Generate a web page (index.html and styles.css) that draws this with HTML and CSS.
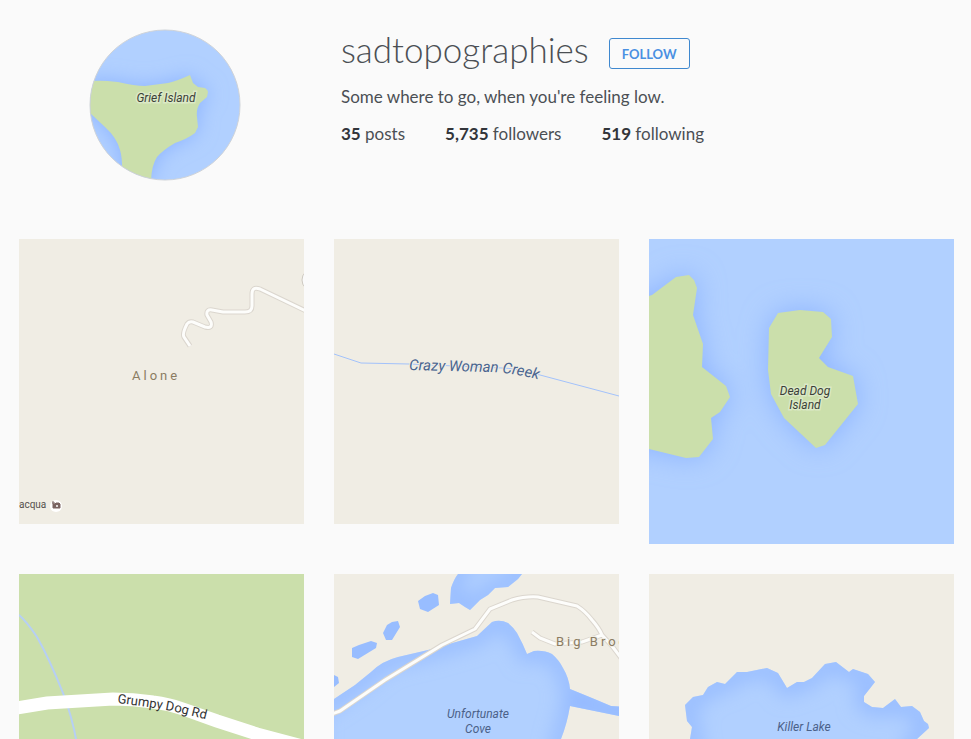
FILE: index.html
```html
<!DOCTYPE html>
<html lang="en">
<head>
    <meta charset="UTF-8">
    <meta name="viewport" content="width=device-width, initial-scale=1.0">
    <title>sadtopographies</title>
    <link rel="stylesheet" href="styles.css">
</head>
<body>
    <header class="profile">
        <svg class="avatar" viewBox="0 0 152 152" role="img" aria-label="Grief Island">
            <defs>
                <clipPath id="round"><circle cx="76" cy="76" r="75"/></clipPath>
                <filter id="blur" x="-50%" y="-50%" width="200%" height="200%"><feGaussianBlur stdDeviation="14"/></filter>
                <filter id="blurSmall" x="-50%" y="-50%" width="200%" height="200%"><feGaussianBlur stdDeviation="10"/></filter>
                <path id="grief" d="M-5 52 L4 52 Q12 51 29 53 Q46 57 56 57 L79 54 Q88 52 101 46 L104 54 L109 58 L116 59 Q119 61 119 63 L118 68 L111 74 Q107 80 108 88 L109 98 L106 104 Q98 110 86 114 Q74 121 68 128 Q62 137 62 155 L33 155 Q34 130 31 121 Q28 109 16 98 L1 84 L-5 84 Z"/>
            </defs>
            <g clip-path="url(#round)">
                <rect class="water" width="152" height="152"/>
                <use href="#grief" class="shade" filter="url(#blurSmall)"/>
                <use href="#grief" class="park"/>
                <text class="place halo-park" x="77" y="73">Grief Island</text>
            </g>
            <circle class="ring" cx="76" cy="76" r="75"/>
        </svg>

        <div class="info">
            <div class="title">
                <h1>sadtopographies</h1>
                <button type="button" class="follow">FOLLOW</button>
            </div>
            <p class="bio">Some where to go, when you're feeling low.</p>
            <ul class="stats">
                <li><b>35</b> posts</li>
                <li><b>5,735</b> followers</li>
                <li><b>519</b> following</li>
            </ul>
        </div>
    </header>

    <main class="photos">
        <!-- Alone -->
        <svg class="photo" viewBox="0 0 285 285">
            <defs>
                <path id="track" d="M171 107 L165 98 Q163 95 168 85 Q170 82 174 83 L186 88 Q194 90 192 83 L188 76 Q187 70 193 71 L204 73 L226 73 Q233 73 233 67 L233 55 Q233 47 241 50 L287 72"/>
            </defs>
            <rect class="land" width="285" height="285"/>
            <use href="#track" class="road-edge"/>
            <use href="#track" class="road-top"/>
            <circle class="bend" cx="294" cy="41" r="11"/>
            <text class="town" x="113" y="141">Alone</text>
            <text class="poi" x="0" y="269">acqua</text>
            <circle class="white" cx="37" cy="267" r="6"/>
            <path class="camera" d="M34 265 h2 l1 -1 h3 l1 1 v4 h-7 z M33 264 h3 M34 262 v3"/>
            <circle class="white" cx="38" cy="267" r="1"/>
        </svg>

        <!-- Crazy Woman Creek -->
        <svg class="photo" viewBox="0 0 285 285">
            <rect class="land" width="285" height="285"/>
            <path class="creek" d="M0 115 L27 124 L75 125 L168 129 Q180 129 206 136 L285 157"/>
            <path id="creekLine" fill="none" d="M75 131 L155 133 Q175 133 215 143"/>
            <text class="creek-name"><textPath href="#creekLine">Crazy Woman Creek</textPath></text>
        </svg>

        <!-- Dead Dog Island -->
        <svg class="photo" viewBox="0 0 305 305">
            <defs>
                <path id="mainland" d="M-30 58 L0 57 L3 56 L27 38 L40 36 L45 41 L48 49 L44 76 L54 105 L53 128 L77 147 L81 158 L71 173 L62 179 L64 200 L50 218 L37 219 L0 210 L-30 210 Z"/>
                <path id="deadDog" d="M129 74 L151 71 L174 73 L182 80 L183 98 L170 119 L179 128 L204 137 L209 165 L176 206 L167 209 L135 179 L122 155 L119 131 L120 89 Z"/>
            </defs>
            <rect class="water" width="305" height="305"/>
            <g class="shade" filter="url(#blur)">
                <use href="#mainland"/>
                <use href="#deadDog"/>
            </g>
            <use href="#mainland" class="park"/>
            <use href="#deadDog" class="park"/>
            <text class="place halo-park" x="156" y="156">Dead Dog</text>
            <text class="place halo-park" x="156" y="170">Island</text>
        </svg>

        <!-- Grumpy Dog Rd -->
        <svg class="photo" viewBox="0 0 285 285">
            <rect class="park" width="285" height="285"/>
            <path class="stream" d="M0 41 Q8 48 18 63 Q30 84 44 119 Q53 142 58 170 L64 285"/>
            <path class="highway" d="M-2 134 L28 129 L94 125 Q114 125 134 128 Q150 130 164 135 L198 147 L238 160 L287 173"/>
            <path id="roadLine" fill="none" d="M98 129 Q140 134 162 139 L210 151"/>
            <text class="street"><textPath href="#roadLine">Grumpy Dog Rd</textPath></text>
        </svg>

        <!-- Unfortunate Cove -->
        <svg class="photo" viewBox="0 0 285 285">
            <defs>
                <path id="cove" d="M-20 138 L0 125 L21 111 L37 98 Q48 87 64 83 L94 76 L108 72 L143 62 L158 48 Q166 45 174 49 Q180 54 183 59 Q189 70 193 80 L200 77 Q210 76 218 80 Q225 86 229 94 Q235 104 236 115 L258 124 L277 132 L310 134 L310 142 L285 142 L236 132 Q233 150 227 165 L205 310 L-20 310 Z"/>
                <path id="bay" d="M116 30 L117 14 Q120 5 124 0 L130 -20 L190 -20 L188 0 L184 5 L174 13 L161 14 L154 21 L146 26 L136 36 L131 33 L125 29 Z"/>
                <path id="coastRoad" d="M-2 140 L6 137 L51 106 L108 71 L141 55 L156 35 L178 26 Q192 22 204 23 L243 32 Q251 37 258 46 Q265 54 268 61 M278 72 L287 84 M198 58 L206 64 L221 70 L248 68 L268 61 L278 72"/>
                <clipPath id="coveClip"><use href="#cove"/></clipPath>
                <clipPath id="bayClip"><use href="#bay"/></clipPath>
            </defs>
            <rect class="land" width="285" height="285"/>
            <use href="#cove" class="water"/>
            <g clip-path="url(#coveClip)"><use href="#cove" class="shore" filter="url(#blurSmall)"/></g>
            <use href="#bay" class="water"/>
            <g clip-path="url(#bayClip)"><use href="#bay" class="shore" filter="url(#blurSmall)"/></g>
            <path class="pond" d="M84 27 L91 22 L99 19 L104 21 L105 31 L94 38 L86 35 Z M53 51 L58 48 L64 47 L66 53 L58 66 L52 66 L49 59 Z M18 74 L25 71 L37 67 L43 69 L42 74 L24 85 L18 83 Z M0 101 L4 103 L5 109 L0 113 Z"/>
            <use href="#coastRoad" class="road-edge"/>
            <use href="#coastRoad" class="road-top"/>
            <text class="town halo-land" x="222" y="72">Big Brook</text>
            <text class="place water-name" x="144" y="144">Unfortunate</text>
            <text class="place water-name" x="144" y="159">Cove</text>
        </svg>

        <!-- Killer Lake -->
        <svg class="photo" viewBox="0 0 305 305">
            <defs>
                <path id="lake" d="M36 131 L44 123 L54 121 L59 113 L68 108 L76 110 L88 98 L98 98 L118 94 L129 99 L138 114 L148 108 L155 108 L163 104 L176 90 L187 88 L200 98 L204 95 L219 100 L226 108 L215 122 L215 128 L223 133 L234 134 L246 125 L252 133 L263 132 L271 138 L275 147 L279 150 L280 154 L268 165 L240 215 L150 240 L60 215 L41 165 L43 153 L38 147 Z"/>
                <clipPath id="lakeClip"><use href="#lake"/></clipPath>
            </defs>
            <rect class="land" width="305" height="305"/>
            <use href="#lake" class="water"/>
            <g clip-path="url(#lakeClip)"><use href="#lake" class="shore" filter="url(#blurSmall)"/></g>
            <text class="place water-name" x="155" y="157">Killer Lake</text>
        </svg>
    </main>
</body>
</html>
```
FILE: styles.css
```css
* {
    box-sizing: border-box;
}
body {
    margin: 0;
    background-color: #fafafa;
    font-family: Lato, "Open Sans", sans-serif;
    color: #4b4f54;
}
.profile {
    display: flex;
    align-items: flex-start;
    gap: 100px;
    padding: 29px 18px 58px 89px;
}
.avatar {
    width: 152px;
    height: 152px;
    flex-shrink: 0;
}
.info {
    padding-top: 2px;
}
.title {
    display: flex;
    align-items: flex-end;
    gap: 20px;
}
h1 {
    margin: 0;
    font-size: 35px;
    font-weight: 300;
    line-height: 36px;
    padding-bottom: 2px;
}
.follow {
    height: 31px;
    margin-top: 7px;
    padding: 0 12px;
    border: 1px solid #3f88cf;
    border-radius: 3px;
    background-color: transparent;
    color: #4a90e2;
    font-family: inherit;
    font-size: 13px;
    font-weight: 700;
    cursor: pointer;
}
.bio {
    margin: 17px 0 16px;
    font-size: 17px;
    line-height: 21px;
}
.stats {
    display: flex;
    gap: 40px;
    margin: 0;
    padding: 0;
    list-style: none;
    font-size: 17px;
    line-height: 21px;
}
.stats b {
    color: #32353a;
}
.photos {
    display: grid;
    grid-template-columns: 285fr 285fr 305fr;
    align-items: start;
    gap: 30px;
    padding: 0 17px 30px 19px;
}
.photo {
    display: block;
    width: 100%;
}

/* map colours */
.land {
    fill: #f0ede4;
}
.park {
    fill: #cbdfab;
}
.water {
    fill: #b1d0ff;
}
.pond {
    fill: #98bdff;
}
.white {
    fill: #ffffff;
}
.shade {
    fill: #8cb3ff;
}
.shore {
    fill: none;
    stroke: #92b8ff;
    stroke-width: 14px;
}
.ring {
    fill: none;
    stroke: #cfd3d8;
}
.road-edge, .road-top {
    fill: none;
    stroke-linejoin: round;
}
.road-edge {
    stroke: #dbd6ce;
    stroke-width: 5px;
}
.road-top {
    stroke: #fdfdfb;
    stroke-width: 3px;
}
.bend {
    fill: #fafafa;
    stroke: #cdc9c1;
}
.creek, .stream {
    fill: none;
    stroke: #b6cff5;
    stroke-width: 2px;
}
.creek {
    stroke-width: 1px;
    stroke: #a3c2fb;
}
.highway {
    fill: none;
    stroke: #ffffff;
    stroke-width: 13px;
}
.camera {
    fill: #7a6462;
    stroke: #7a6462;
}

/* map labels */
text {
    font-family: Roboto, sans-serif;
    font-size: 12px;
}
.place {
    fill: #3c3f38;
    font-style: italic;
    text-anchor: middle;
}
.halo-park {
    stroke: #dbe9c6;
    stroke-width: 3px;
    paint-order: stroke;
}
.halo-land {
    stroke: #f0ede4;
    stroke-width: 2px;
    paint-order: stroke;
}
.water-name {
    fill: #4b6188;
}
.town {
    fill: #8b7c62;
    font-size: 13px;
    letter-spacing: 3px;
}
.poi {
    fill: #55504c;
    font-size: 10px;
}
.creek-name {
    fill: #4a6590;
    stroke: #f0ede4;
    stroke-width: 2px;
    paint-order: stroke;
    font-size: 15px;
    font-style: italic;
}
.street {
    fill: #333333;
    font-size: 13px;
}
```
